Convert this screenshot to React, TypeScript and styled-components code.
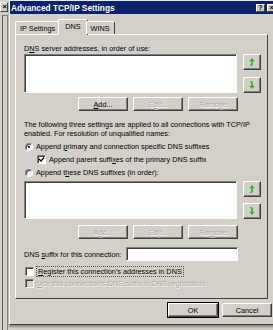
import React from "react";
import styled, { createGlobalStyle, css } from "styled-components";

const Global = createGlobalStyle`
  body {
    margin: 0;
    background: #d4d0c8;
    font-family: "Liberation Sans", Arial, sans-serif;
  }
`;

const Screen = styled.div`
  width: 273px;
  height: 330px;
  overflow: hidden;
  display: flex;
  background: #d4d0c8;
  font-size: 7.3px;
  color: #000;
`;

const BackWindow = styled.div`
  width: 9px;
  flex: none;
  display: flex;
  flex-direction: column;
`;

const BackClose = styled.div`
  margin-top: 2px;
  width: 8px;
  height: 10px;
  box-sizing: border-box;
  border: 1px solid;
  border-color: #fff #404040 #404040 #fff;
  font-size: 8px;
  font-weight: bold;
  line-height: 8px;
  text-align: right;
  overflow: hidden;
`;

const BackFrame = styled.div`
  flex: 1;
  margin-top: 3px;
  margin-left: 2px;
  width: 4px;
  border-left: 1px solid #5a5a5a;
  border-right: 1px solid #808080;
  border-top: 1px solid #808080;
`;

const Dialog = styled.div`
  flex: none;
  width: 268px;
  height: 323px;
  display: flex;
  flex-direction: column;
  border-left: 1px solid #f4f4f4;
  border-top: 1px solid #e8e8e8;
  border-bottom: 1px solid #404040;
  box-shadow: 0 2px 2px rgba(0, 0, 0, 0.35);
  background: #d4d0c8;
`;

const TitleBar = styled.div`
  height: 13px;
  background: #0a246a;
  display: flex;
  align-items: center;
  padding-left: 1px;
`;

const Title = styled.span`
  flex: 1;
  color: #fff;
  font-weight: bold;
  font-size: 8.3px;
`;

const CaptionButton = styled.div`
  width: 9px;
  height: 8px;
  margin-right: 2px;
  box-sizing: border-box;
  background: #d4d0c8;
  border: 1px solid;
  border-color: #fff #404040 #404040 #fff;
  font-size: 7px;
  font-weight: bold;
  line-height: 6px;
  text-align: center;
`;

const Body = styled.div`
  padding: 5px 0 0 5px;
  display: flex;
  flex-direction: column;
`;

const TabStrip = styled.div`
  height: 15px;
  display: flex;
  align-items: flex-end;
  position: relative;
  z-index: 1;
`;

const Tab = styled.div<{ $active?: boolean }>`
  box-sizing: border-box;
  height: 13px;
  padding: 0 4px;
  display: flex;
  align-items: center;
  border: 1px solid;
  border-bottom: none;
  border-color: #fff #404040 #fff #fff;
  border-radius: 2px 2px 0 0;
  background: #d4d0c8;
  ${(p) =>
    p.$active &&
    css`
      height: 16px;
      margin: 0 -2px -1px;
      padding: 0 6px 3px;
    `}
`;

const Panel = styled.div`
  box-sizing: border-box;
  width: 253px;
  height: 265px;
  border: 1px solid;
  border-color: #fff #404040 #404040 #fff;
  padding: 0 0 0 8px;
  display: flex;
  flex-direction: column;
`;

const Label = styled.div<{ $top?: number }>`
  line-height: 9px;
  margin-top: ${(p) => p.$top ?? 0}px;
  white-space: nowrap;
`;

const ListRow = styled.div<{ $top: number }>`
  display: flex;
  gap: 6px;
  margin-top: ${(p) => p.$top}px;
`;

const ListBox = styled.div<{ $h: number }>`
  box-sizing: border-box;
  width: 213px;
  height: ${(p) => p.$h}px;
  background: #fff;
  border: 1px solid;
  border-color: #808080 #fff #fff #808080;
  box-shadow: inset 1px 1px #404040;
`;

const MoveColumn = styled.div`
  display: flex;
  flex-direction: column;
  justify-content: space-between;
`;

const raised = css`
  box-sizing: border-box;
  background: #d4d0c8;
  border: 1px solid;
  border-color: #fff #404040 #404040 #fff;
  box-shadow: inset -1px -1px #808080;
`;

const disabledText = css`
  color: #aaa79f;
  text-shadow: 0.5px 0.5px #fff;
`;

const MoveButton = styled.div`
  ${raised};
  width: 18px;
  height: 16px;
  display: flex;
  align-items: center;
  justify-content: center;
`;

const ButtonRow = styled.div<{ $top: number }>`
  width: 214px;
  display: flex;
  justify-content: flex-end;
  gap: 5px;
  margin-top: ${(p) => p.$top}px;
`;

const Button = styled.div<{ $disabled?: boolean }>`
  ${raised};
  width: 50px;
  height: 14px;
  display: flex;
  align-items: center;
  justify-content: center;
  ${(p) => p.$disabled && disabledText}
`;

const Option = styled.div<{ $indent?: number; $h?: number; $disabled?: boolean }>`
  height: ${(p) => p.$h ?? 13}px;
  display: flex;
  align-items: center;
  gap: 3px;
  padding-left: ${(p) => 1 + (p.$indent ?? 0)}px;
  white-space: nowrap;
  ${(p) => p.$disabled && disabledText}
`;

const Radio = styled.span<{ $on?: boolean }>`
  box-sizing: border-box;
  width: 8px;
  height: 8px;
  border-radius: 50%;
  background: #fff;
  border: 1px solid;
  border-color: #808080 #fff #fff #808080;
  box-shadow: inset 1px 1px #404040;
  display: flex;
  align-items: center;
  justify-content: center;
  &::after {
    content: "";
    width: 2px;
    height: 2px;
    border-radius: 50%;
    background: ${(p) => (p.$on ? "#000" : "transparent")};
  }
`;

const Check = styled.span<{ $disabled?: boolean }>`
  box-sizing: border-box;
  width: 9px;
  height: 9px;
  background: ${(p) => (p.$disabled ? "#d4d0c8" : "#fff")};
  border: 1px solid;
  border-color: #808080 #fff #fff #808080;
  box-shadow: inset 1px 1px #404040;
  display: flex;
  align-items: center;
  justify-content: center;
`;

const Focus = styled.span`
  display: inline-block;
  line-height: 9px;
  padding: 0 1px;
  outline: 1px dotted #555;
`;

const SuffixRow = styled.div`
  display: flex;
  align-items: center;
  margin-top: 8px;
  gap: 4px;
`;

const TextField = styled.div`
  box-sizing: border-box;
  width: 112px;
  height: 14px;
  background: #fff;
  border: 1px solid;
  border-color: #808080 #fff #fff #808080;
  box-shadow: inset 1px 1px #404040;
`;

const Footer = styled.div`
  display: flex;
  gap: 4px;
  padding: 4px 0 0 153px;
`;

const DefaultButton = styled(Button)`
  outline: 1px solid #000;
`;

const U = styled.span`
  text-decoration: underline;
`;

const ArrowUp = () => (
  <svg width="6" height="8" viewBox="0 0 6 8">
    <path d="M3 0 L6 3.2 L4 3.2 L4 6 Q4 8 1.5 8 L1 8 L1 6.8 Q2.2 6.8 2.2 6 L2.2 3.2 L0 3.2 Z" fill="#2eb82e" />
  </svg>
);

const ArrowDown = () => (
  <svg width="6" height="8" viewBox="0 0 6 8">
    <path d="M3 8 L6 4.8 L4 4.8 L4 2 Q4 0 1.5 0 L1 0 L1 1.2 Q2.2 1.2 2.2 2 L2.2 4.8 L0 4.8 Z" fill="#2eb82e" />
  </svg>
);

const Tick = () => (
  <svg width="7" height="7" viewBox="0 0 7 7">
    <path d="M1 3 L3 5 L6 1.5" stroke="#000" strokeWidth="1.4" fill="none" />
  </svg>
);

const ListWithMove = ({ top, h }: { top: number; h: number }) => (
  <ListRow $top={top}>
    <ListBox $h={h} />
    <MoveColumn>
      <MoveButton>
        <ArrowUp />
      </MoveButton>
      <MoveButton>
        <ArrowDown />
      </MoveButton>
    </MoveColumn>
  </ListRow>
);

export default function App() {
  return (
    <Screen>
      <Global />
      <BackWindow>
        <BackClose>×</BackClose>
        <BackFrame />
      </BackWindow>
      <Dialog>
        <TitleBar>
          <Title>Advanced TCP/IP Settings</Title>
          <CaptionButton>?</CaptionButton>
          <CaptionButton>×</CaptionButton>
        </TitleBar>
        <Body>
          <TabStrip>
            <Tab>IP Settings</Tab>
            <Tab $active>DNS</Tab>
            <Tab>WINS</Tab>
          </TabStrip>
          <Panel>
            <Label $top={9}>
              D<U>N</U>S server addresses, in order of use:
            </Label>
            <ListWithMove top={1} h={39} />
            <ButtonRow $top={4}>
              <Button>
                <U>A</U>dd...
              </Button>
              <Button $disabled>
                E<U>d</U>it...
              </Button>
              <Button $disabled>
                Remo<U>v</U>e
              </Button>
            </ButtonRow>
            <Label $top={9}>
              The following three settings are applied to all connections with TCP/IP
              <br />
              enabled. For resolution of unqualified names:
            </Label>
            <Option style={{ marginTop: 2 }}>
              <Radio $on />
              <span>
                Append <U>p</U>rimary and connection specific DNS suffixes
              </span>
            </Option>
            <Option $indent={12}>
              <Check>
                <Tick />
              </Check>
              <span>
                Append parent suffi<U>x</U>es of the primary DNS suffix
              </span>
            </Option>
            <Option>
              <Radio />
              <span>
                Append t<U>h</U>ese DNS suffixes (in order):
              </span>
            </Option>
            <ListWithMove top={2} h={38} />
            <ButtonRow $top={6}>
              <Button $disabled>
                A<U>d</U>d...
              </Button>
              <Button $disabled>
                Ed<U>i</U>t...
              </Button>
              <Button $disabled>
                Re<U>m</U>ove
              </Button>
            </ButtonRow>
            <SuffixRow>
              <span>
                DNS <U>s</U>uffix for this connection:
              </span>
              <TextField />
            </SuffixRow>
            <Option $h={12} style={{ marginTop: 4 }}>
              <Check />
              <Focus>
                <U>R</U>egister this connection's addresses in DNS
              </Focus>
            </Option>
            <Option $h={12} $disabled>
              <Check $disabled />
              <span>
                <U>U</U>se this connection's DNS suffix in DNS registration
              </span>
            </Option>
          </Panel>
          <Footer>
            <DefaultButton>OK</DefaultButton>
            <Button>Cancel</Button>
          </Footer>
        </Body>
      </Dialog>
    </Screen>
  );
}
